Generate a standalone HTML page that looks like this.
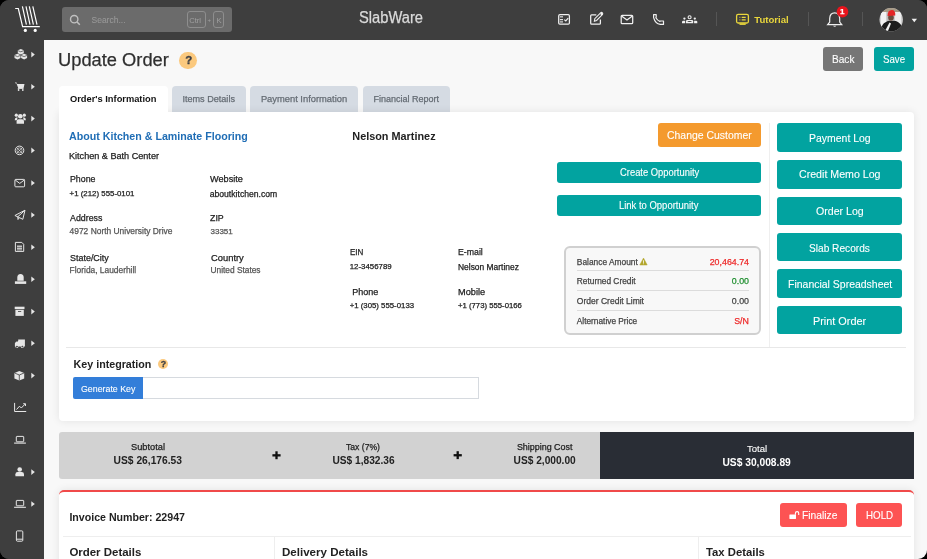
<!DOCTYPE html>
<html><head><meta charset="utf-8"><title>Update Order</title>
<style>
*{box-sizing:border-box;margin:0;padding:0}
html,body{width:927px;height:559px;overflow:hidden;background:#000;font-family:"Liberation Sans",sans-serif}
#app{will-change:transform;position:absolute;left:0;top:0;width:927px;height:559px;background:#3e3e3e;border-radius:9px;overflow:hidden}
.abs{position:absolute}
.t{position:absolute;white-space:nowrap;line-height:1;-webkit-text-stroke:0.25px currentColor}
svg{position:absolute;overflow:visible}

</style></head>
<body>
<div id="app">
<div class="abs" style="left:44px;top:40px;width:883px;height:519px;background:#f8f8f8"></div>
<div class="abs" style="left:0px;top:0px;width:927px;height:40px;background:#3e3e3e"></div>
<div class="abs" style="left:0px;top:40px;width:44px;height:519px;background:#3e3e3e"></div>
<div class="abs" style="left:62px;top:7px;width:170px;height:25px;background:#6b6b6b;border-radius:3px"></div>
<div class="abs" style="left:186.5px;top:11.2px;width:19.4px;height:16.5px;border:1px solid #8e8e8e;border-radius:3px"></div>
<div class="abs" style="left:213.3px;top:11.2px;width:11.2px;height:16.5px;border:1px solid #8e8e8e;border-radius:3px"></div>
<div class="abs" style="left:716px;top:12.3px;width:1px;height:13.7px;background:#555"></div>
<div class="abs" style="left:807.7px;top:12.3px;width:1px;height:13.7px;background:#555"></div>
<div class="abs" style="left:862px;top:12.3px;width:1px;height:13.7px;background:#555"></div>
<div class="abs" style="left:179.4px;top:51.6px;width:17.8px;height:17.8px;background:#fbc97e;border-radius:50%"></div>
<div class="abs" style="left:822.5px;top:47.4px;width:40.7px;height:24px;background:#767676;border-radius:3px"></div>
<div class="abs" style="left:873.5px;top:47.4px;width:40.5px;height:24px;background:#02a3a0;border-radius:3px"></div>
<div class="abs" style="left:171.9px;top:86px;width:74.1px;height:26px;background:#d5dbe3;border-radius:4px 4px 0 0"></div>
<div class="abs" style="left:250.2px;top:86px;width:108px;height:26px;background:#d5dbe3;border-radius:4px 4px 0 0"></div>
<div class="abs" style="left:362.7px;top:86px;width:87.3px;height:26px;background:#d5dbe3;border-radius:4px 4px 0 0"></div>
<div class="abs" style="left:59px;top:112.4px;width:855px;height:308.4px;background:#fff;border-radius:0 4px 4px 4px;box-shadow:0 0 8px rgba(0,0,0,0.09)"></div>
<div class="abs" style="left:58.6px;top:86px;width:109.2px;height:27px;background:#fff;border-radius:4px 4px 0 0"></div>
<div class="abs" style="left:658px;top:123.3px;width:103.2px;height:23.7px;background:#f49a2e;border-radius:3px"></div>
<div class="abs" style="left:556.6px;top:161.7px;width:204.6px;height:20.9px;background:#02a3a0;border-radius:3px"></div>
<div class="abs" style="left:556.6px;top:195px;width:204.6px;height:20.9px;background:#02a3a0;border-radius:3px"></div>
<div class="abs" style="left:769px;top:123px;width:1px;height:224px;background:#efefef"></div>
<div class="abs" style="left:563.8px;top:246.2px;width:197px;height:89.2px;background:#f8f8f8;border:2px solid #d0d0d0;border-radius:6px"></div>
<div class="abs" style="left:576.8px;top:269.9px;width:172.3px;height:1px;background:#dcdcdc"></div>
<div class="abs" style="left:576.8px;top:290.1px;width:172.3px;height:1px;background:#dcdcdc"></div>
<div class="abs" style="left:576.8px;top:310px;width:172.3px;height:1px;background:#dcdcdc"></div>
<div class="abs" style="left:776.7px;top:123.3px;width:125.6px;height:28.5px;background:#02a3a0;border-radius:3px"></div>
<div class="abs" style="left:776.7px;top:160px;width:125.6px;height:28.5px;background:#02a3a0;border-radius:3px"></div>
<div class="abs" style="left:776.7px;top:196.5px;width:125.6px;height:28.5px;background:#02a3a0;border-radius:3px"></div>
<div class="abs" style="left:776.7px;top:232.8px;width:125.6px;height:28.5px;background:#02a3a0;border-radius:3px"></div>
<div class="abs" style="left:776.7px;top:269.3px;width:125.6px;height:28.5px;background:#02a3a0;border-radius:3px"></div>
<div class="abs" style="left:776.7px;top:305.9px;width:125.6px;height:28.5px;background:#02a3a0;border-radius:3px"></div>
<div class="abs" style="left:66px;top:346.5px;width:840px;height:1px;background:#e8e8e8"></div>
<div class="abs" style="left:158.1px;top:359.1px;width:10.4px;height:10.4px;background:#fbc97e;border-radius:50%"></div>
<div class="abs" style="left:142.8px;top:377px;width:335.8px;height:21.6px;background:#fff;border:1px solid #d6dadf;border-left:none"></div>
<div class="abs" style="left:73.1px;top:377px;width:69.7px;height:21.6px;background:#337ed9;border-radius:2px 0 0 2px"></div>
<div class="abs" style="left:59px;top:432px;width:855px;height:46.6px;background:#d2d2d2;border-radius:3px 0 0 3px"></div>
<div class="abs" style="left:600.4px;top:432px;width:313.6px;height:46.6px;background:#292d35"></div>
<div class="abs" style="left:59px;top:490px;width:855px;height:80px;background:#fff;border-top:2px solid #f04a4a;border-radius:5px 5px 0 0;box-shadow:0 0 8px rgba(0,0,0,0.09)"></div>
<div class="abs" style="left:780px;top:503px;width:66.9px;height:24.2px;background:#fd5353;border-radius:3px"></div>
<div class="abs" style="left:856.3px;top:503px;width:46.2px;height:24.2px;background:#fd5353;border-radius:3px"></div>
<div class="abs" style="left:63px;top:536px;width:848px;height:1px;background:#eeeeee"></div>
<div class="abs" style="left:274px;top:536px;width:1px;height:30px;background:#eeeeee"></div>
<div class="abs" style="left:698px;top:536px;width:1px;height:30px;background:#eeeeee"></div>
<!-- logo -->
<svg style="left:0;top:0" width="927" height="559" viewBox="0 0 927 559">
 <g fill="none" stroke="#fff" stroke-width="1.2">
  <path d="M15.2 8.5H18.3L22.6 26.7H39.8"/>
  <path d="M22.4 6.3L26.4 24.6M26 6.3L30 24.6M29.3 6.3L33.4 24.6M32.8 6.3L37 24.6"/>
 </g>
 <circle cx="25.3" cy="30.4" r="1.6" fill="#fff"/><circle cx="35.2" cy="30.4" r="1.6" fill="#fff"/>
 <!-- search icon -->
 <circle cx="74.2" cy="19.2" r="3.7" fill="none" stroke="#c0c0c0" stroke-width="1.4"/>
 <path d="M77 22L79.8 24.8" stroke="#c0c0c0" stroke-width="1.5"/>
 <!-- top icons -->
 <g fill="none" stroke="#f0f0f0" stroke-width="1.25">
  <rect x="558.7" y="14.7" width="10.7" height="9.4" rx="1.2"/>
  <path d="M564.3 19.6L565.8 21L568.2 18.2" stroke-width="1.2"/>
  <path d="M596.3 14.9H591.6Q590.7 14.9 590.7 15.8V23.2Q590.7 24.1 591.6 24.1H599.5Q600.4 24.1 600.4 23.2V19.6"/>
  <path d="M594.4 21.2L594.8 18.7L600.6 12.9Q601.5 12 602.4 12.9Q603.2 13.8 602.3 14.7L596.6 20.5Z" stroke-width="1.1"/>
  <rect x="621.2" y="15.3" width="11.5" height="8.4" rx="1"/>
  <path d="M621.5 16L627 20L632.4 16"/>
  <path d="M653.6 14.6H656.2V17.2L655.8 17.8Q657.3 20.4 659.8 21.4L660.6 21H663.5V24.4H660.3Q655.3 23.8 653.6 17.6Z" stroke-width="1.2" stroke-linejoin="round"/>
 </g>
 <path d="M600.8 13.3L602.4 14.9" stroke="#f0f0f0" stroke-width="2"/>
 <g fill="#c8c8c8">
  <rect x="559.9" y="16.1" width="3.1" height="1.4"/><rect x="559.9" y="21.2" width="3.1" height="1.4"/>
 </g>
 <rect x="559.9" y="19.1" width="3.1" height="1.1" fill="#f4f4f4"/>
 <!-- group -->
 <g fill="#f0f0f0">
  <circle cx="689.6" cy="17.2" r="1.5" fill="none" stroke="#f0f0f0" stroke-width="1.1"/>
  <path d="M686 23.2V21.2Q686 19.9 687.3 19.9H691.9Q693.2 19.9 693.2 21.2V23.2Z"/>
  <circle cx="684.4" cy="18.6" r="1.15"/><circle cx="694.8" cy="18.6" r="1.15"/>
  <path d="M682 23.2V21.8Q682.2 20.8 683.2 20.8H685.2V23.2Z"/>
  <path d="M697.3 23.2V21.8Q697.1 20.8 696.1 20.8H694.1V23.2Z"/>
 </g>
 <ellipse cx="689.6" cy="21.6" rx="2.2" ry="0.5" fill="#3e3e3e"/>
 <!-- tutorial -->
 <g fill="none" stroke="#e9d63c" stroke-width="1.3">
  <rect x="736.6" y="14.4" width="11.8" height="8.6" rx="1.5"/>
  <path d="M739.5 17.3H740.3M741.7 17.3H745.7M739.5 19.9H740.3M741.7 19.9H745.7"/>
 </g>
 <rect x="739.5" y="23.4" width="6.2" height="1.5" fill="#e9d63c"/>
 <!-- bell -->
 <path d="M834.7 12.8Q839.5 12.8 839.7 18.5V22L841.8 24.7H827.6L829.7 22V18.5Q829.9 12.8 834.7 12.8Z" fill="none" stroke="#f0f0f0" stroke-width="1.2"/>
 <path d="M833 25.8Q834.7 27.6 836.4 25.8Z" fill="#f0f0f0"/>
 <circle cx="842.5" cy="11.7" r="5.8" fill="#e8141c"/>
 <!-- avatar -->
 <defs><clipPath id="av"><circle cx="891.2" cy="19.7" r="11.7"/></clipPath></defs>
 <g clip-path="url(#av)">
  <rect x="879" y="7" width="25" height="26" fill="#cfcfcf"/>
  <rect x="879" y="7" width="25" height="5" fill="#a89a86"/>
  <rect x="881" y="12" width="5" height="14" fill="#f2f2f2"/>
  <rect x="895" y="12" width="6" height="12" fill="#eeeeee"/>
  <rect x="887" y="12" width="2" height="10" fill="#bdbdbd"/>
  <path d="M880 33Q881 24 886 22Q889 20 891 21Q895 20 898 22Q903 25 903 33Z" fill="#1c1c1c"/>
  <path d="M885 31L889.5 22.5L891 23.5L888 31Z" fill="#f0f0f0"/>
  <ellipse cx="891" cy="17.6" rx="2.8" ry="3.2" fill="#6b4b3c"/>
  <path d="M887.6 16Q887.4 10 891.8 10Q895.6 10 895.3 15.5Z" fill="#e42525"/>
 </g>
 <path d="M911.6 18.7H917L914.3 22.3Z" fill="#f0f0f0"/>
<!-- plus -->
 <rect x="272.4" y="454.2" width="8.2" height="2.3" fill="#111"/><rect x="275.35" y="451.3" width="2.3" height="7.9" fill="#111"/>
 <rect x="453.6" y="454.1" width="8.2" height="2.3" fill="#111"/><rect x="456.55" y="451.2" width="2.3" height="7.9" fill="#111"/>
 <!-- lock -->
 <rect x="789.4" y="514.6" width="6.6" height="4.4" rx="0.4" fill="#fff"/>
 <path d="M795.4 514.8V513.2Q795.4 511.6 797.1 511.6Q798.7 511.6 798.7 513.2V515" fill="none" stroke="#fff" stroke-width="1.1"/>
 <!-- warning -->
 <path d="M643.5 258L647.2 265H639.8Z" fill="#b3a62c" stroke="#b3a62c" stroke-width="0.5" stroke-linejoin="round"/>
 <rect x="643.1" y="260.3" width="0.8" height="2.6" fill="#fff"/><rect x="643.1" y="263.4" width="0.8" height="0.8" fill="#fff"/>
</svg>
<div class="t" style="left:840.1px;top:7.6px;font-size:8px;font-weight:bold;color:#fff;line-height:1">1</div>
<svg style="left:0;top:0" width="44" height="559" viewBox="0 0 44 559">
 <g fill="#e6e6e6">
  <!-- carets -->
  <path d="M31.3 51.8L34.8 54.6L31.3 57.4Z"/>
  <path d="M31.3 84L34.8 86.8L31.3 89.6Z"/>
  <path d="M31.3 115.8L34.8 118.6L31.3 121.4Z"/>
  <path d="M31.3 147.6L34.8 150.4L31.3 153.2Z"/>
  <path d="M31.3 180.2L34.8 183L31.3 185.8Z"/>
  <path d="M31.3 212.2L34.8 215L31.3 217.8Z"/>
  <path d="M31.3 244.5L34.8 247.3L31.3 250.1Z"/>
  <path d="M31.3 276.5L34.8 279.3L31.3 282.1Z"/>
  <path d="M31.3 308.8L34.8 311.6L31.3 314.4Z"/>
  <path d="M31.3 340.5L34.8 343.3L31.3 346.1Z"/>
  <path d="M31.3 372.8L34.8 375.6L31.3 378.4Z"/>
  <path d="M31.3 469.3L34.8 472.1L31.3 474.9Z"/>
  <path d="M31.3 501.2L34.8 504L31.3 506.8Z"/>
  <!-- 1 cubes -->
  <path d="M20.8 49L23.8 50.3V53.3L20.8 54.6L17.8 53.3V50.3Z"/>
  <path d="M17.5 53.8L20.5 55.1V58.1L17.5 59.4L14.5 58.1V55.1Z"/>
  <path d="M24.1 53.8L27.1 55.1V58.1L24.1 59.4L21.1 58.1V55.1Z"/>
 </g>
 <g fill="none" stroke="#3e3e3e" stroke-width="0.7">
  <path d="M17.8 50.6L20.8 51.8L23.8 50.6M14.5 55.4L17.5 56.6L20.5 55.4M21.1 55.4L24.1 56.6L27.1 55.4"/>
 </g>
 <g fill="#e6e6e6">
  <!-- 2 cart -->
  <path d="M15 82.5H16.6L17.2 84H24.5L23.6 88H18.2L16.4 83.3H15Z"/>
  <rect x="17.8" y="88" width="5.8" height="0.9"/>
  <circle cx="18.6" cy="90" r="0.9"/><circle cx="22.8" cy="90" r="0.9"/>
  <!-- 3 users -->
  <circle cx="20.3" cy="116.3" r="2.3"/>
  <path d="M16.6 123.7V121.5Q16.6 119.2 18.6 119.2H22Q24 119.2 24 121.5V123.7Z"/>
  <circle cx="16.3" cy="115.2" r="1.6"/><circle cx="24.3" cy="115.2" r="1.6"/>
  <path d="M14.7 120.3Q14.7 117.6 16.4 117.6H17.8L17.1 119V120.3Z"/>
  <path d="M25.9 120.3Q25.9 117.6 24.2 117.6H22.8L23.5 119V120.3Z"/>
 </g>
 <g fill="none" stroke="#e6e6e6" stroke-width="1">
  <!-- 4 target -->
  <circle cx="19.5" cy="150.4" r="4.3"/>
  <circle cx="19.5" cy="150.4" r="2.6" stroke-width="0.6"/>
  <path d="M16.6 147.5L22.4 153.3M22.4 147.5L16.6 153.3" stroke-width="0.7"/>
  <!-- 5 envelope -->
  <rect x="14.9" y="179.4" width="9.7" height="7.4" rx="0.8"/>
  <path d="M15.2 180L19.75 183.4L24.3 180"/>
  <!-- 6 plane -->
  <path d="M14.9 215.5L25 210.2L22.8 219.3L19.4 217.6Z" stroke-linejoin="round"/>
  <path d="M25 210.2L17.8 216.8L18 219.5L19.4 217.6" />
  <!-- 7 doc -->
  <path d="M15.4 242.4H21.8L23.7 244.3V251.4H15.4Z"/>
 </g>
 <g fill="#e6e6e6">
  <rect x="17" y="245.6" width="5" height="1.2"/><rect x="17" y="247.6" width="5" height="1.2"/><rect x="17" y="249.5" width="5" height="0.8"/>
  <!-- 8 stamp -->
  <path d="M17.3 277.5Q17.3 273.9 20.5 273.9Q23.7 273.9 23.7 277.5V280.8H17.3Z"/>
  <rect x="14.9" y="281.3" width="11.3" height="2.6"/>
  <!-- 9 archive -->
  <rect x="14.7" y="306.7" width="9.8" height="2.4"/>
  <path d="M15.4 309.8H23.8V315.9H15.4Z"/>
  <!-- 10 truck -->
  <path d="M18.2 339.4H24.9V346.4H14.9V343.2L16.5 341H18.2Z"/>
  <circle cx="16.9" cy="346.6" r="1.5"/><circle cx="22.3" cy="346.6" r="1.5"/>
  <!-- 11 cube -->
  <path d="M19.3 370.9L24.2 372.9V378.6L19.3 380.6L14.4 378.6V372.9Z"/>
  <!-- 14 user -->
  <circle cx="19.7" cy="469.5" r="2.3"/>
  <path d="M15.4 476.2V474.2Q15.4 472 17.7 472H21.7Q24 472 24 474.2V476.2Z"/>
 </g>
 <g fill="none" stroke="#3e3e3e" stroke-width="0.8">
  <path d="M15.5 348L16.8 346.4H18.2Z" fill="#3e3e3e" stroke="none"/>
  <path d="M14.6 373L19.3 375L24 373M19.3 375V380.5" />
  <path d="M18 311.5H21.2" />
  <circle cx="16.9" cy="346.6" r="0.5" fill="#3e3e3e"/><circle cx="22.3" cy="346.6" r="0.5" fill="#3e3e3e"/>
  <path d="M15.5 341.4H18" stroke-width="0.6"/>
 </g>
 <g fill="none" stroke="#e6e6e6" stroke-width="1">
  <!-- 12 chart -->
  <path d="M14.6 402.9V411.5H26.2"/>
  <path d="M16.5 409.5L19.5 406.2L21.3 408L25.2 404"/>
  <path d="M23.2 403.7H25.5V406"/>
  <!-- 13 laptop -->
  <rect x="16.3" y="436.4" width="7.4" height="5.4" rx="0.5"/>
  <path d="M14.1 443.1H25.9" stroke-width="1.1"/>
  <!-- 15 laptop -->
  <rect x="16.3" y="500.4" width="7.4" height="5.4" rx="0.5"/>
  <path d="M14.1 507.3H25.9" stroke-width="1.1"/>
  <!-- 16 mobile -->
  <rect x="16.4" y="530.9" width="6.4" height="10.3" rx="1"/>
  <path d="M16.4 539.2H22.8"/>
 </g>
</svg>

<div class="t" style="left:91.5px;top:16.07px;font-size:8.50px;color:#979797;-webkit-text-stroke:0.1px;">Search...</div>
<div class="t" style="left:189.2px;top:16.54px;font-size:7.60px;color:#a0a0a0;-webkit-text-stroke:0;">Ctrl</div>
<div class="t" style="left:207.4px;top:16.90px;font-size:6.00px;color:#a0a0a0;-webkit-text-stroke:0;">+</div>
<div class="t" style="left:216.6px;top:16.54px;font-size:7.60px;color:#a0a0a0;-webkit-text-stroke:0;">K</div>
<div class="t" style="left:359.3px;top:10.01px;font-size:15.64px;color:#dadada;transform:scaleX(0.94);transform-origin:0 0;">SlabWare</div>
<div class="t" style="left:754.3px;top:15.24px;font-size:9.60px;font-weight:bold;-webkit-text-stroke:0;color:#e9d63c;">Tutorial</div>
<div class="t" style="left:58.4px;top:50.11px;font-size:19.16px;color:#2f2f2f;transform:scaleX(0.955);transform-origin:0 0;">Update Order</div>
<div class="t" style="left:-11.3px;width:400px;text-align:center;top:55.23px;font-size:11.50px;font-weight:bold;-webkit-text-stroke:0;color:#3f4045;-webkit-text-stroke:0.35px #3f4045;">?</div>
<div class="t" style="left:831.6px;top:54.47px;font-size:10.86px;-webkit-text-stroke:0.1px;color:#fff;transform:scaleX(0.93);transform-origin:0 0;">Back</div>
<div class="t" style="left:882.6px;top:54.83px;font-size:10.43px;-webkit-text-stroke:0.1px;color:#fff;transform:scaleX(0.93);transform-origin:0 0;">Save</div>
<div class="t" style="left:70.0px;top:95.20px;font-size:9.30px;font-weight:bold;-webkit-text-stroke:0;color:#111;">Order's Information</div>
<div class="t" style="left:182.4px;top:95.17px;font-size:9.10px;color:#656c74;">Items Details</div>
<div class="t" style="left:260.9px;top:94.94px;font-size:9.36px;color:#656c74;">Payment Information</div>
<div class="t" style="left:373.4px;top:95.25px;font-size:9.00px;color:#656c74;">Financial Report</div>
<div class="t" style="left:69.0px;top:131.13px;font-size:10.67px;font-weight:bold;-webkit-text-stroke:0;color:#1f6db5;">About Kitchen &amp; Laminate Flooring</div>
<div class="t" style="left:69.0px;top:151.67px;font-size:9.10px;color:#222;">Kitchen &amp; Bath Center</div>
<div class="t" style="left:69.6px;top:174.55px;font-size:9.00px;color:#222;transform:scaleX(0.978);transform-origin:0 0;">Phone</div>
<div class="t" style="left:210.2px;top:174.55px;font-size:9.00px;color:#222;transform:scaleX(1.017);transform-origin:0 0;">Website</div>
<div class="t" style="left:69.6px;top:190.31px;font-size:7.87px;color:#222;">+1 (212) 555-0101</div>
<div class="t" style="left:209.7px;top:189.65px;font-size:8.65px;color:#222;">aboutkitchen.com</div>
<div class="t" style="left:69.6px;top:214.25px;font-size:9.00px;color:#222;transform:scaleX(0.981);transform-origin:0 0;">Address</div>
<div class="t" style="left:210.4px;top:214.25px;font-size:9.00px;color:#222;transform:scaleX(0.978);transform-origin:0 0;">ZIP</div>
<div class="t" style="left:69.6px;top:227.24px;font-size:8.42px;color:#555;">4972 North University Drive</div>
<div class="t" style="left:210.5px;top:227.58px;font-size:8.02px;color:#555;">33351</div>
<div class="t" style="left:69.6px;top:253.95px;font-size:9.00px;color:#222;transform:scaleX(0.994);transform-origin:0 0;">State/City</div>
<div class="t" style="left:210.5px;top:253.95px;font-size:9.00px;color:#222;transform:scaleX(1.041);transform-origin:0 0;">Country</div>
<div class="t" style="left:69.6px;top:266.36px;font-size:8.40px;color:#555;">Florida, Lauderhill</div>
<div class="t" style="left:210.5px;top:266.42px;font-size:8.33px;color:#555;">United States</div>
<div class="t" style="left:352.3px;top:131.17px;font-size:10.86px;font-weight:bold;-webkit-text-stroke:0;color:#222;">Nelson Martinez</div>
<div class="t" style="left:349.7px;top:248.25px;font-size:9.00px;color:#222;transform:scaleX(0.889);transform-origin:0 0;">EIN</div>
<div class="t" style="left:458.0px;top:248.25px;font-size:9.00px;color:#222;transform:scaleX(0.972);transform-origin:0 0;">E-mail</div>
<div class="t" style="left:349.7px;top:263.31px;font-size:7.87px;color:#222;">12-3456789</div>
<div class="t" style="left:458.0px;top:262.83px;font-size:8.44px;color:#222;">Nelson Martinez</div>
<div class="t" style="left:352.3px;top:288.15px;font-size:9.00px;color:#222;">Phone</div>
<div class="t" style="left:458.0px;top:288.15px;font-size:9.00px;color:#222;transform:scaleX(1.022);transform-origin:0 0;">Mobile</div>
<div class="t" style="left:349.7px;top:301.77px;font-size:7.80px;color:#222;">+1 (305) 555-0133</div>
<div class="t" style="left:458.0px;top:301.82px;font-size:7.74px;color:#222;">+1 (773) 555-0166</div>
<div class="t" style="left:667.0px;top:130.26px;font-size:11.23px;-webkit-text-stroke:0.1px;color:#fff;transform:scaleX(0.93);transform-origin:0 0;">Change Customer</div>
<div class="t" style="left:619.5px;top:168.02px;font-size:10.10px;-webkit-text-stroke:0.1px;color:#fff;transform:scaleX(0.93);transform-origin:0 0;">Create Opportunity</div>
<div class="t" style="left:619.3px;top:201.24px;font-size:10.18px;-webkit-text-stroke:0.1px;color:#fff;transform:scaleX(0.93);transform-origin:0 0;">Link to Opportunity</div>
<div class="t" style="left:576.8px;top:257.96px;font-size:8.40px;color:#444;">Balance Amount</div>
<div class="t" style="left:709.7px;top:257.57px;font-size:8.86px;color:#ee2a2a;">20,464.74</div>
<div class="t" style="left:576.8px;top:277.41px;font-size:8.34px;color:#444;">Returned Credit</div>
<div class="t" style="left:731.8px;top:277.02px;font-size:8.80px;color:#1f8f2f;">0.00</div>
<div class="t" style="left:576.8px;top:297.46px;font-size:8.52px;color:#444;">Order Credit Limit</div>
<div class="t" style="left:731.8px;top:297.22px;font-size:8.80px;color:#444;">0.00</div>
<div class="t" style="left:576.8px;top:317.34px;font-size:8.31px;color:#444;">Alternative Price</div>
<div class="t" style="left:734.2px;top:316.92px;font-size:8.80px;color:#ee2a2a;">S/N</div>
<div class="t" style="left:808.8px;top:132.93px;font-size:11.26px;-webkit-text-stroke:0.1px;color:#fff;transform:scaleX(0.93);transform-origin:0 0;">Payment Log</div>
<div class="t" style="left:799.0px;top:169.48px;font-size:11.43px;-webkit-text-stroke:0.1px;color:#fff;transform:scaleX(0.93);transform-origin:0 0;">Credit Memo Log</div>
<div class="t" style="left:815.8px;top:206.01px;font-size:11.40px;-webkit-text-stroke:0.1px;color:#fff;transform:scaleX(0.93);transform-origin:0 0;">Order Log</div>
<div class="t" style="left:809.2px;top:242.71px;font-size:10.92px;-webkit-text-stroke:0.1px;color:#fff;transform:scaleX(0.93);transform-origin:0 0;">Slab Records</div>
<div class="t" style="left:787.5px;top:278.91px;font-size:11.28px;-webkit-text-stroke:0.1px;color:#fff;transform:scaleX(0.93);transform-origin:0 0;">Financial Spreadsheet</div>
<div class="t" style="left:813.0px;top:315.16px;font-size:11.70px;-webkit-text-stroke:0.1px;color:#fff;transform:scaleX(0.93);transform-origin:0 0;">Print Order</div>
<div class="t" style="left:73.6px;top:359.31px;font-size:10.69px;font-weight:bold;-webkit-text-stroke:0;color:#222;">Key integration</div>
<div class="t" style="left:-36.6px;width:400px;text-align:center;top:360.42px;font-size:8.80px;font-weight:bold;-webkit-text-stroke:0;color:#3f4045;-webkit-text-stroke:0.3px #3f4045;">?</div>
<div class="t" style="left:80.7px;top:384.03px;font-size:9.49px;-webkit-text-stroke:0.1px;color:#fff;transform:scaleX(0.93);transform-origin:0 0;">Generate Key</div>
<div class="t" style="left:131.0px;top:442.82px;font-size:9.27px;color:#222;">Subtotal</div>
<div class="t" style="left:113.6px;top:456.39px;font-size:10.25px;font-weight:bold;-webkit-text-stroke:0;color:#222;">US$ 26,176.53</div>
<div class="t" style="left:346.0px;top:443.37px;font-size:8.62px;color:#222;">Tax (7%)</div>
<div class="t" style="left:332.5px;top:456.46px;font-size:10.17px;font-weight:bold;-webkit-text-stroke:0;color:#222;">US$ 1,832.36</div>
<div class="t" style="left:516.9px;top:443.11px;font-size:8.93px;color:#222;">Shipping Cost</div>
<div class="t" style="left:513.6px;top:456.46px;font-size:10.17px;font-weight:bold;-webkit-text-stroke:0;color:#222;">US$ 2,000.00</div>
<div class="t" style="left:747.0px;top:444.27px;font-size:9.56px;-webkit-text-stroke:0.1px;color:#fff;">Total</div>
<div class="t" style="left:722.4px;top:458.39px;font-size:10.25px;font-weight:bold;-webkit-text-stroke:0;color:#fff;">US$ 30,008.89</div>
<div class="t" style="left:69.4px;top:511.68px;font-size:10.61px;font-weight:bold;-webkit-text-stroke:0;color:#222;">Invoice Number: 22947</div>
<div class="t" style="left:802.0px;top:509.69px;font-size:11.08px;-webkit-text-stroke:0.1px;color:#fff;transform:scaleX(0.93);transform-origin:0 0;">Finalize</div>
<div class="t" style="left:865.8px;top:510.15px;font-size:10.53px;-webkit-text-stroke:0.1px;color:#fff;transform:scaleX(0.93);transform-origin:0 0;">HOLD</div>
<div class="t" style="left:69.4px;top:546.86px;font-size:11.46px;font-weight:bold;-webkit-text-stroke:0;color:#222;">Order Details</div>
<div class="t" style="left:282.0px;top:546.78px;font-size:11.55px;font-weight:bold;-webkit-text-stroke:0;color:#222;">Delivery Details</div>
<div class="t" style="left:706.0px;top:546.99px;font-size:11.31px;font-weight:bold;-webkit-text-stroke:0;color:#222;">Tax Details</div>
</div>
</body></html>
